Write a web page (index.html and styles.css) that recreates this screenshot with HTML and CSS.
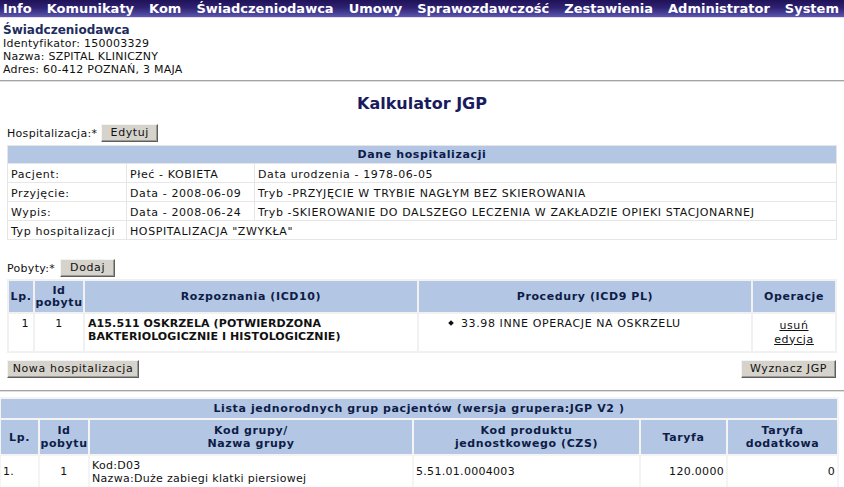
FILE: index.html
```html
<!DOCTYPE html>
<html lang="pl">
<head>
<meta charset="utf-8">
<title>Kalkulator JGP</title>
<link rel="stylesheet" href="styles.css">
</head>
<body>
<nav class="menu">
  <span class="menu-item">Info</span>
  <span class="menu-item">Komunikaty</span>
  <span class="menu-item">Kom</span>
  <span class="menu-item">Świadczeniodawca</span>
  <span class="menu-item">Umowy</span>
  <span class="menu-item">Sprawozdawczość</span>
  <span class="menu-item">Zestawienia</span>
  <span class="menu-item">Administrator</span>
  <span class="menu-item">System</span>
</nav>

<div class="provider">
  <div class="provider-name">Świadczeniodawca</div>
  <div class="provider-line">Identyfikator: 150003329</div>
  <div class="provider-line">Nazwa: SZPITAL KLINICZNY</div>
  <div class="provider-line">Adres: 60-412 POZNAŃ, 3 MAJA</div>
</div>

<div class="sep sep-top"></div>

<h1 class="title">Kalkulator JGP</h1>

<div class="content">
  <div class="field-row row-hosp">
    <span class="label">Hospitalizacja:*</span>
    <button class="btn btn-edytuj">Edytuj</button>
  </div>

  <table class="tbl tbl-hosp">
    <colgroup>
      <col class="c-h1"><col class="c-h2"><col class="c-h3">
    </colgroup>
    <tr><th colspan="3" class="th-title">Dane hospitalizacji</th></tr>
    <tr><td>Pacjent:</td><td>Płeć - KOBIETA</td><td>Data urodzenia - 1978-06-05</td></tr>
    <tr><td>Przyjęcie:</td><td>Data - 2008-06-09</td><td>Tryb -PRZYJĘCIE W TRYBIE NAGŁYM BEZ SKIEROWANIA</td></tr>
    <tr><td>Wypis:</td><td>Data - 2008-06-24</td><td>Tryb -SKIEROWANIE DO DALSZEGO LECZENIA W ZAKŁADZIE OPIEKI STACJONARNEJ</td></tr>
    <tr><td>Typ hospitalizacji</td><td colspan="2">HOSPITALIZACJA "ZWYKŁA"</td></tr>
  </table>

  <div class="field-row row-pobyty">
    <span class="label">Pobyty:*</span>
    <button class="btn btn-dodaj">Dodaj</button>
  </div>

  <table class="tbl tbl-pob">
    <colgroup>
      <col class="c-p1"><col class="c-p2"><col class="c-p3"><col class="c-p4"><col class="c-p5">
    </colgroup>
    <tr class="head2">
      <th>Lp.</th><th>Id<br>pobytu</th><th>Rozpoznania (ICD10)</th><th>Procedury (ICD9 PL)</th><th>Operacje</th>
    </tr>
    <tr class="pob-row">
      <td class="num-r">1</td>
      <td class="num-c">1</td>
      <td class="diag">A15.511 OSKRZELA (POTWIERDZONA<br>BAKTERIOLOGICZNIE I HISTOLOGICZNIE)</td>
      <td class="proc"><ul class="proc-list"><li><span class="bullet"></span>33.98 INNE OPERACJE NA OSKRZELU</li></ul></td>
      <td class="ops"><a href="#" class="link">usuń</a><br><a href="#" class="link">edycja</a></td>
    </tr>
  </table>

  <div class="actions">
    <button class="btn btn-nowa">Nowa hospitalizacja</button>
    <button class="btn btn-wyznacz">Wyznacz JGP</button>
  </div>
</div>

<div class="sep sep-mid"></div>

<table class="tbl tbl-jgp">
  <colgroup>
    <col class="c-j1"><col class="c-j2"><col class="c-j3"><col class="c-j4"><col class="c-j5"><col class="c-j6">
  </colgroup>
  <tr><th colspan="6" class="th-title">Lista jednorodnych grup pacjentów (wersja grupera:JGP V2 )</th></tr>
  <tr class="head3">
    <th>Lp.</th><th>Id<br>pobytu</th><th>Kod grupy/<br>Nazwa grupy</th><th>Kod produktu<br>jednostkowego (CZS)</th><th>Taryfa</th><th>Taryfa<br>dodatkowa</th>
  </tr>
  <tr class="jgp-row">
    <td>1.</td>
    <td class="num-c">1</td>
    <td>Kod:D03<br>Nazwa:Duże zabiegi klatki piersiowej</td>
    <td>5.51.01.0004003</td>
    <td class="num-r">120.0000</td>
    <td class="num-r">0</td>
  </tr>
</table>
</body>
</html>
```

FILE: styles.css
```css
html, body {
  margin: 0;
  padding: 0;
  background: #ffffff;
}

body {
  font-family: "DejaVu Sans", Verdana, sans-serif;
  font-size: 11px;
  letter-spacing: 0.6px;
  color: #111111;
  width: 844px;
  overflow: hidden;
}

/* top menu */
.menu {
  display: flex;
  gap: 15px;
  height: 17px;
  padding-left: 3px;
  background: linear-gradient(#1f1257 0%, #2f2272 45%, #4a439a 80%, #5c5aad 100%);
  border-bottom: 1px solid #e9dcef;
}

.menu-item {
  color: #ffffff;
  font-weight: bold;
  font-size: 13px;
  line-height: 17px;
  letter-spacing: 0;
  white-space: nowrap;
}

/* provider block */
.provider {
  padding: 5px 3px 0;
}

.provider-name {
  font-size: 12px;
  font-weight: bold;
  line-height: 14px;
  letter-spacing: 0;
  color: #1c2d5e;
}

.provider-line {
  line-height: 13px;
  letter-spacing: 0.25px;
}

/* separators */
.sep {
  border-top: 1px solid #a4a4a4;
  border-bottom: 1px solid #dedede;
}

.sep-top {
  margin-top: 4px;
}

.sep-mid {
  margin-top: 12px;
}

/* title */
.title {
  margin: 12px 0 0;
  text-align: center;
  font-size: 16px;
  line-height: 20px;
  font-weight: bold;
  letter-spacing: 0;
  color: #1a1b5e;
}

.content {
  padding: 0 7px;
}

.field-row {
  display: flex;
  align-items: center;
  height: 18px;
}

.row-hosp {
  margin-top: 10px;
  gap: 4px;
}

.row-pobyty {
  margin-top: 19px;
  gap: 5px;
}

.label {
  line-height: 13px;
  letter-spacing: 0.3px;
}

/* buttons */
.btn {
  box-sizing: border-box;
  height: 18px;
  margin: 0;
  font-family: "DejaVu Sans", Verdana, sans-serif;
  font-size: 11px;
  letter-spacing: 0.6px;
  line-height: 14px;
  color: #111111;
  background: #d6d3cc;
  border: 1px solid;
  border-color: #f4f4f4 #5e5e5e #5e5e5e #f4f4f4;
  box-shadow: inset -1px -1px 0 #9c9a95;
  padding: 0 4px 1px;
  cursor: pointer;
}

.btn-edytuj {
  width: 57px;
}

.btn-dodaj {
  width: 55px;
}

.btn-nowa {
  width: 132px;
}

.btn-wyznacz {
  width: 95px;
}

.actions {
  display: flex;
  justify-content: space-between;
  margin-top: 7px;
  padding-right: 1px;
}

/* tables */
.tbl {
  border-collapse: separate;
  table-layout: fixed;
}

.tbl th {
  background: #b3c7e4;
  color: #0e1c47;
  font-weight: bold;
  text-align: center;
  padding: 0;
}

.tbl td {
  background: #ffffff;
  vertical-align: top;
  padding: 0;
}

.th-title {
  height: 17px;
  line-height: 13px;
}

/* hospitalization table */
.tbl-hosp {
  width: 830px;
  margin-top: 3px;
  border-spacing: 1px;
  background: #e6e6e6;
}

.tbl-hosp td {
  padding: 4px 3px 1px;
  line-height: 13px;
  white-space: nowrap;
}

.c-h1 { width: 118px; }
.c-h2 { width: 127px; }
.c-h3 { width: auto; }

/* stays table */
.tbl-pob {
  width: 830px;
  margin-top: 2px;
  border-spacing: 2px;
  background: #f1f1f1;
}

.c-p1 { width: 24px; }
.c-p2 { width: 48px; }
.c-p3 { width: 332px; }
.c-p4 { width: 332px; }
.c-p5 { width: 82px; }

.head2 th {
  height: 31px;
  line-height: 12px;
  vertical-align: middle;
}

.pob-row td {
  height: 37px;
  box-sizing: border-box;
  padding: 3px 3px 8px;
  line-height: 13px;
}

.diag {
  font-weight: bold;
  letter-spacing: 0.1px;
  white-space: nowrap;
}

.num-r {
  text-align: right;
}

.pob-row .num-r {
  padding-right: 4px;
}

.num-c {
  text-align: center;
}

.proc-list {
  list-style: none;
  margin: 0;
  padding: 0 0 0 27px;
}

.proc-list li {
  display: flex;
  align-items: center;
  gap: 8px;
  white-space: nowrap;
}

.bullet {
  display: inline-block;
  flex: none;
  width: 4px;
  height: 4px;
  background: #111111;
  transform: rotate(45deg);
  margin-top: -2px;
}

.pob-row .ops {
  vertical-align: middle;
  text-align: center;
  line-height: 14px;
  padding: 0 3px;
}

.link {
  color: #111111;
  text-decoration: underline;
}

/* JGP table */
.tbl-jgp {
  width: 840px;
  margin-top: 5px;
  border-spacing: 2px;
  background: #f4f4f4;
  margin-left: -1px;
}

.c-j1 { width: 37px; }
.c-j2 { width: 48px; }
.c-j3 { width: 322px; }
.c-j4 { width: 225px; }
.c-j5 { width: 85px; }
.c-j6 { width: 109px; }

.tbl-jgp .th-title {
  height: 19px;
}

.head3 th {
  height: 34px;
  line-height: 13px;
  vertical-align: middle;
}

.jgp-row td {
  height: 29px;
  vertical-align: middle;
  line-height: 13px;
  letter-spacing: 0.3px;
  padding: 1px 2px;
  white-space: nowrap;
}
```
